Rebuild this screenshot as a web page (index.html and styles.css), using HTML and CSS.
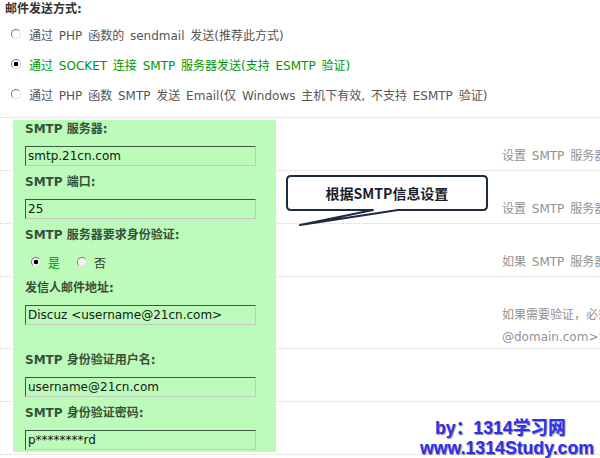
FILE: index.html
```html
<!DOCTYPE html>
<html lang="zh-CN">
<head>
  <meta charset="UTF-8">
  <title>邮件设置</title>
  <link rel="stylesheet" href="styles.css">
</head>
<body>
  <div class="page">
    <!-- Send mode -->
    <div class="mode">
      <h3 class="title">邮件发送方式:</h3>
      <label class="opt"><input type="radio" name="mailsend">通过 PHP 函数的 sendmail 发送(推荐此方式)</label>
      <label class="opt on"><input type="radio" name="mailsend" checked>通过 SOCKET 连接 SMTP 服务器发送(支持 ESMTP 验证)</label>
      <label class="opt"><input type="radio" name="mailsend">通过 PHP 函数 SMTP 发送 Email(仅 Windows 主机下有效, 不支持 ESMTP 验证)</label>
    </div>

    <!-- SMTP settings -->
    <div class="settings">
      <div class="row first">
        <div class="field">
          <div class="label">SMTP 服务器:</div>
          <input class="txt" type="text" value="smtp.21cn.com">
        </div>
        <div class="tips">设置 SMTP 服务器的地址</div>
      </div>
      <div class="row">
        <div class="field">
          <div class="label">SMTP 端口:</div>
          <input class="txt" type="text" value="25">
        </div>
        <div class="tips">设置 SMTP 服务器的端口，默认为 25</div>
      </div>
      <div class="row">
        <div class="field">
          <div class="label">SMTP 服务器要求身份验证:</div>
          <div class="choices">
            <label class="choice on"><input type="radio" name="auth" checked>是</label>
            <label class="choice"><input type="radio" name="auth">否</label>
          </div>
        </div>
        <div class="tips">如果 SMTP 服务器要求身份验证才可以发信，请选择“是”</div>
      </div>
      <div class="row">
        <div class="field">
          <div class="label">发信人邮件地址:</div>
          <input class="txt" type="text" value="Discuz <username@21cn.com>">
        </div>
        <div class="tips">如果需要验证，必须为本服务器的邮件地址。格式为 Discuz &lt;username<br>@domain.com&gt;”</div>
      </div>
      <div class="row">
        <div class="field">
          <div class="label">SMTP 身份验证用户名:</div>
          <input class="txt" type="text" value="username@21cn.com">
        </div>
        <div class="tips"></div>
      </div>
      <div class="row last">
        <div class="field">
          <div class="label">SMTP 身份验证密码:</div>
          <input class="txt" type="text" value="p********rd">
        </div>
        <div class="tips"></div>
      </div>
    </div>

    <!-- Annotation bubble -->
    <div class="callout">
      <svg class="callout-shape" width="210" height="56" viewBox="0 0 210 56">
        <path d="M7 3 H199 Q203 3 203 7 V33 Q203 37 199 37 H114 L16 52 L89 37 H7 Q3 37 3 33 V7 Q3 3 7 3 Z" fill="#fff" stroke="#1c2b3e" stroke-width="2" stroke-linejoin="round"/>
      </svg>
      <div class="callout-text">根据SMTP信息设置</div>
    </div>

    <!-- Watermark -->
    <div class="watermark">
      <div class="wm-by">by：1314学习网</div>
      <div class="wm-url">www.1314Study.com</div>
    </div>
  </div>
</body>
</html>
```

FILE: styles.css
```css
:root {
  --line-color: #c6d8e8;
  --panel-green: #bdfbba;
  --label-color: #34503a;
  --tip-color: #929292;
  --opt-color: #555555;
  --on-color: #009600;
}

* {
  margin: 0;
  padding: 0;
  box-sizing: border-box;
}

body {
  font-family: "DejaVu Sans", "Noto Sans CJK SC", sans-serif;
  font-size: 12px;
  color: var(--opt-color);
  background: #fff;
  overflow: hidden;
}

.page {
  position: relative;
  width: 600px;
  height: 458px;
  overflow: hidden;
}

/* Send mode block */
.mode {
  padding: 0 5px 8px;
  border-bottom: 1px dotted var(--line-color);
}

.title {
  font-size: 12px;
  font-weight: bold;
  line-height: 19px;
  color: #333;
}

.opt {
  display: flex;
  align-items: center;
  height: 30px;
  padding-left: 6px;
  white-space: nowrap;
  word-spacing: 2px;
}

.opt.on {
  color: var(--on-color);
}

/* Classic radio look */
input[type="radio"] {
  appearance: none;
  -webkit-appearance: none;
  width: 10px;
  height: 10px;
  border-radius: 50%;
  border: 1px solid;
  border-color: #7a7a7a #dcdcdc #dcdcdc #7a7a7a;
  background: #fff;
  margin-right: 8px;
  flex-shrink: 0;
}

input[type="radio"]:checked {
  background: radial-gradient(circle, #000 0 2px, #fff 2.6px);
}

/* Settings rows */
.row {
  display: flex;
  border-bottom: 1px dotted var(--line-color);
}

.field {
  display: flex;
  flex-direction: column;
  align-items: flex-start;
  width: 263px;
  flex-shrink: 0;
  margin-left: 13px;
  margin-bottom: -1px;
  padding: 0 0 5px 12px;
  background: var(--panel-green);
}

.row.first .field {
  margin-top: 2px;
}

.row.first .label {
  margin-top: -2px;
}

.row.last .field {
  margin-bottom: 2px;
  padding-bottom: 2px;
}

.label {
  line-height: 22px;
  font-weight: bold;
  color: var(--label-color);
  white-space: nowrap;
}

.txt {
  margin-top: 6px;
  width: 231px;
  height: 20px;
  padding: 0 2px;
  font-family: "DejaVu Sans", "Noto Sans CJK SC", sans-serif;
  font-size: 12px;
  color: #102010;
  background: transparent;
  border: 1px solid;
  border-color: #3e5a40 #bfc9bf #bfc9bf #3e5a40;
  outline: none;
}

.choices {
  display: flex;
  align-items: center;
  height: 20px;
  margin-top: 6px;
  padding-left: 6px;
}

.choice {
  display: flex;
  align-items: center;
  margin-right: 17px;
  color: #2c3a2c;
}

.choice input[type="radio"] {
  margin-right: 7px;
  background-color: #eef6ee;
}

.choice input[type="radio"]:checked {
  background: radial-gradient(circle, #000 0 2px, #eef6ee 2.6px);
}

.choice.on {
  color: var(--on-color);
}

.tips {
  margin-left: 226px;
  padding-top: 27px;
  line-height: 22px;
  color: var(--tip-color);
  white-space: nowrap;
  word-spacing: 2px;
}

/* Annotation bubble */
.callout {
  position: absolute;
  left: 284px;
  top: 173px;
  width: 210px;
  height: 56px;
}

.callout-shape {
  display: block;
}

.callout-text {
  position: absolute;
  left: 3px;
  top: 3px;
  width: 200px;
  height: 34px;
  display: flex;
  align-items: center;
  justify-content: center;
  font-family: "Noto Sans CJK SC", "DejaVu Sans", sans-serif;
  font-size: 14px;
  font-weight: bold;
  color: #1b1d2c;
}

/* Watermark */
.watermark {
  position: absolute;
  left: 420px;
  top: 418px;
  font-family: "Liberation Sans", "Noto Sans CJK SC", sans-serif;
  font-size: 17.7px;
  font-weight: bold;
  line-height: 20px;
  color: #2f2ff2;
  text-shadow: 1px 1px 1px rgba(0, 0, 0, 0.45);
  white-space: nowrap;
}

.wm-by {
  padding-left: 15px;
}
```
